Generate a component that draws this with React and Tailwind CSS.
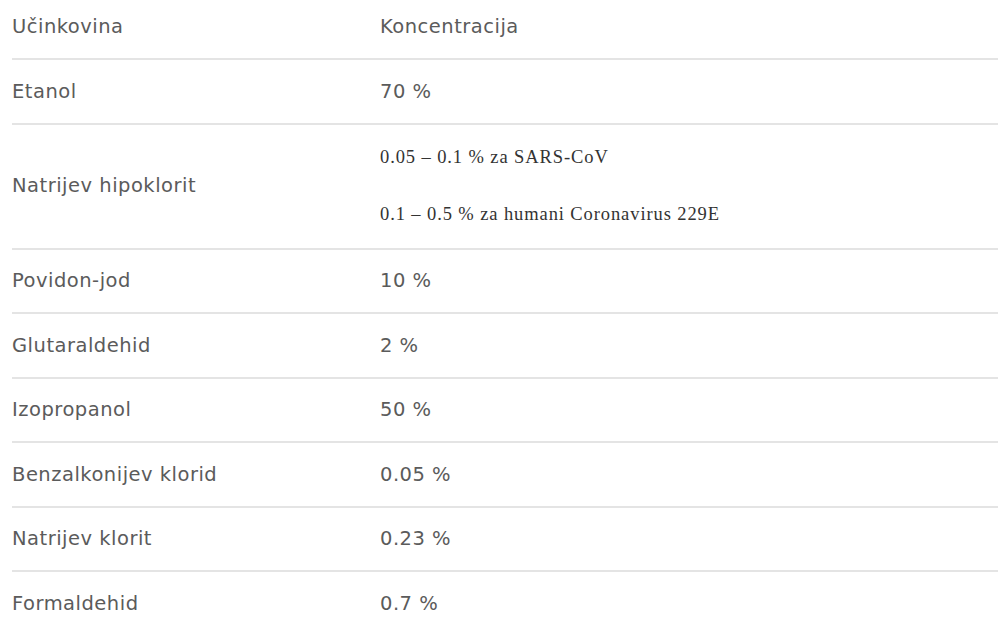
import React from 'react';

const rows = [
  { name: 'Etanol', value: '70 %' },
  {
    name: 'Natrijev hipoklorit',
    lines: ['0.05 – 0.1 % za SARS-CoV', '0.1 – 0.5 % za humani Coronavirus 229E'],
  },
  { name: 'Povidon-jod', value: '10 %' },
  { name: 'Glutaraldehid', value: '2 %' },
  { name: 'Izopropanol', value: '50 %' },
  { name: 'Benzalkonijev klorid', value: '0.05 %' },
  { name: 'Natrijev klorit', value: '0.23 %' },
  { name: 'Formaldehid', value: '0.7 %' },
];

const App = () => {
  const sans = "font-['DejaVu_Sans',sans-serif] text-[19.5px] tracking-[0.5px] text-[#5b5b5b]";

  return (
    <div className="min-h-screen bg-white pl-3 pr-[5px]">
      <div className="flex h-[58px] items-center pb-1">
        <div className={`w-[368px] ${sans}`}>Učinkovina</div>
        <div className={sans}>Koncentracija</div>
      </div>

      {rows.map((row) => (
        <div
          key={row.name}
          className={`flex items-center border-t-2 border-[#e4e4e4] ${row.lines ? 'h-[125px]' : 'h-[64.5px]'}`}
        >
          <div className={`w-[368px] ${sans}`}>{row.name}</div>
          {row.lines ? (
            <div className="flex flex-col gap-[29px] font-['Liberation_Serif',serif] text-[18.5px] tracking-[0.9px] text-[#333]">
              {row.lines.map((line) => (
                <p key={line}>{line}</p>
              ))}
            </div>
          ) : (
            <div className={sans}>{row.value}</div>
          )}
        </div>
      ))}
    </div>
  );
};

export default App;
